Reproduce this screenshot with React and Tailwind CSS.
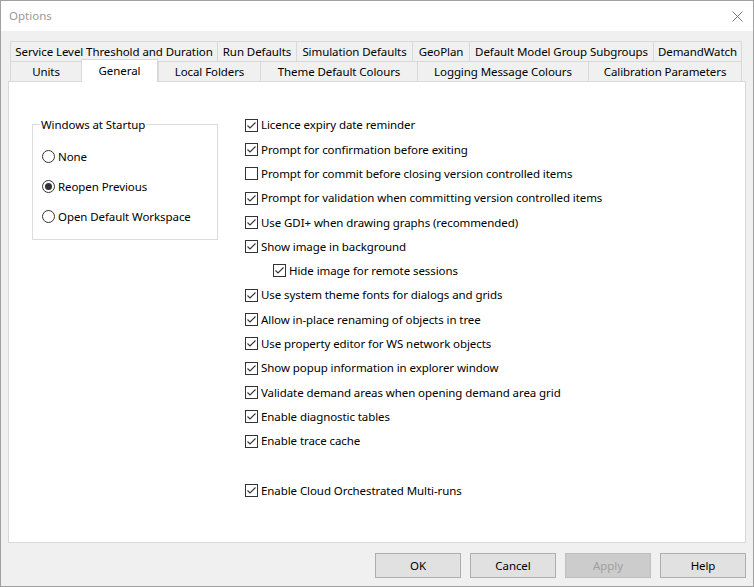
import React from 'react';

const font = { fontFamily: '"Noto Sans", "Open Sans", Arial, sans-serif' };

// top row of tabs
const topTabs = [
  { label: 'Service Level Threshold and Duration', w: 'w-[207px]' },
  { label: 'Run Defaults', w: 'w-[79px]' },
  { label: 'Simulation Defaults', w: 'w-[116px]' },
  { label: 'GeoPlan', w: 'w-[57px]' },
  { label: 'Default Model Group Subgroups', w: 'w-[184px]' },
  { label: 'DemandWatch', w: 'w-[89px]', last: true },
];

const bottomTabs = [
  { label: 'Units', w: 'w-[71px]' },
  { label: 'General', w: 'w-[77px]', active: true },
  { label: 'Local Folders', w: 'w-[102px]' },
  { label: 'Theme Default Colours', w: 'w-[157px]' },
  { label: 'Logging Message Colours', w: 'w-[171px]' },
  { label: 'Calibration Parameters', w: 'w-[154px]', last: true },
];

const options = [
  { label: 'Licence expiry date reminder', checked: true },
  { label: 'Prompt for confirmation before exiting', checked: true },
  { label: 'Prompt for commit before closing version controlled items', checked: false },
  { label: 'Prompt for validation when committing version controlled items', checked: true },
  { label: 'Use GDI+ when drawing graphs (recommended)', checked: true },
  { label: 'Show image in background', checked: true },
  { label: 'Hide image for remote sessions', checked: true, indent: true },
  { label: 'Use system theme fonts for dialogs and grids', checked: true },
  { label: 'Allow in-place renaming of objects in tree', checked: true },
  { label: 'Use property editor for WS network objects', checked: true },
  { label: 'Show popup information in explorer window', checked: true },
  { label: 'Validate demand areas when opening demand area grid', checked: true },
  { label: 'Enable diagnostic tables', checked: true },
  { label: 'Enable trace cache', checked: true },
];

function CheckBox({ checked }) {
  return (
    <span className="w-[13px] h-[13px] border border-[#333333] bg-white flex items-center justify-center shrink-0">
      {checked && (
        <svg width="11" height="11" viewBox="0 0 11 11">
          <polyline points="1.5,5.5 4,8 9.5,2.5" fill="none" stroke="#333333" strokeWidth="1.1" />
        </svg>
      )}
    </span>
  );
}

function Radio({ checked }) {
  return (
    <span className="w-[13px] h-[13px] rounded-full border border-[#333333] bg-white flex items-center justify-center shrink-0">
      {checked && <span className="w-[7px] h-[7px] rounded-full bg-[#333333]" />}
    </span>
  );
}

function CheckRow({ label, checked, indent }) {
  return (
    <div className={`h-[24.3px] flex items-center gap-[3px] ${indent ? 'pl-[28px]' : ''}`}>
      <CheckBox checked={checked} />
      <span className="text-[11.5px] tracking-[-0.08px] text-black leading-none">{label}</span>
    </div>
  );
}

export default function App() {
  return (
    <div style={font} className="w-[754px] h-[587px] border border-[#a0a0a0] bg-[#f0f0f0] flex flex-col overflow-hidden">
      {/* title bar */}
      <div className="h-[30px] bg-white flex items-center justify-between pl-[8px] pr-[10px] shrink-0">
        <span className="text-[11.5px] text-[#999999]">Options</span>
        <svg width="11" height="11" viewBox="0 0 11 11">
          <path d="M0.5 0.5 L10.5 10.5 M10.5 0.5 L0.5 10.5" stroke="#777777" strokeWidth="1" />
        </svg>
      </div>

      <div className="pl-[7px] pr-[7px] pt-[10px] flex flex-col text-[11.5px] tracking-[-0.08px]">
        {/* tabs */}
        <div className="pl-[2px] flex flex-col">
          <div className="flex h-[20px]">
            {topTabs.map((t) => (
              <div
                key={t.label}
                className={`${t.w} h-[20px] border-t border-l border-[#d9d9d9] ${t.last ? 'border-r' : ''} flex items-center justify-center text-black whitespace-nowrap`}
              >
                {t.label}
              </div>
            ))}
          </div>
          <div className="flex h-[20px] items-end">
            {bottomTabs.map((t) =>
              t.active ? (
                <div
                  key={t.label}
                  className={`${t.w} h-[23px] -mb-px relative z-10 bg-white border-t border-l border-r border-[#d9d9d9] flex items-start justify-center pt-[2px] text-black whitespace-nowrap`}
                >
                  {t.label}
                </div>
              ) : (
                <div
                  key={t.label}
                  className={`${t.w} h-[20px] border-t border-l border-[#d9d9d9] ${t.last ? 'border-r' : ''} flex items-center justify-center text-black whitespace-nowrap`}
                >
                  {t.label}
                </div>
              )
            )}
          </div>
        </div>

        {/* panel */}
        <div className="w-[738px] h-[462px] bg-white border border-[#d9d9d9] flex">
          <div className="pl-[23px] pt-[34px] w-[236px] shrink-0">
            <fieldset className="w-[186px] h-[124px] border border-[#dcdcdc] pl-[9px]">
              <legend className="ml-[-2px] px-[1px] text-black">Windows at Startup</legend>
              <div className="flex flex-col pt-[8px]">
                {[
                  { label: 'None', checked: false },
                  { label: 'Reopen Previous', checked: true },
                  { label: 'Open Default Workspace', checked: false },
                ].map((r) => (
                  <div key={r.label} className="h-[30px] flex items-center gap-[3px]">
                    <Radio checked={r.checked} />
                    <span className="text-black leading-none">{r.label}</span>
                  </div>
                ))}
              </div>
            </fieldset>
          </div>

          <div className="pt-[31px] flex flex-col">
            {options.map((o) => (
              <CheckRow key={o.label} {...o} />
            ))}
            <div className="h-[25.5px]" />
            <CheckRow label="Enable Cloud Orchestrated Multi-runs" checked />
          </div>
        </div>

        {/* buttons */}
        <div className="flex justify-end gap-[9px] pt-[10px]">
          <button className="w-[86px] h-[25px] bg-[#e1e1e1] border border-[#adadad] text-black">OK</button>
          <button className="w-[86px] h-[25px] bg-[#e1e1e1] border border-[#adadad] text-black">Cancel</button>
          <button className="w-[86px] h-[25px] bg-[#cccccc] border border-[#bfbfbf] text-[#a0a0a0]">Apply</button>
          <button className="w-[86px] h-[25px] bg-[#e1e1e1] border border-[#adadad] text-black">Help</button>
        </div>
      </div>
    </div>
  );
}
